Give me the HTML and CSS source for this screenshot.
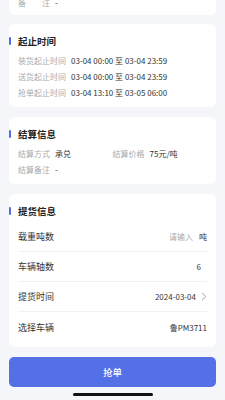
FILE: index.html
```html
<!DOCTYPE html>
<html lang="zh">
<head>
<meta charset="utf-8">
<meta name="viewport" content="width=225">
<link rel="stylesheet" href="styles.css">
</head>
<body>
<div class="page">
  <div class="card card-top">
    <div class="kv"><span class="k k-just"><span>备</span><span>注</span></span><span class="v">-</span></div>
  </div>

  <div class="card">
    <div class="title">起止时间</div>
    <div class="kv"><span class="k">装货起止时间</span><span class="v">03-04 00:00 至 03-04 23:59</span></div>
    <div class="kv"><span class="k">送货起止时间</span><span class="v">03-04 00:00 至 03-04 23:59</span></div>
    <div class="kv"><span class="k">抢单起止时间</span><span class="v">03-04 13:10 至 03-05 06:00</span></div>
  </div>

  <div class="card">
    <div class="title">结算信息</div>
    <div class="grid2">
      <div class="kv"><span class="k">结算方式</span><span class="v">承兑</span></div>
      <div class="kv"><span class="k">结算价格</span><span class="v">75元/吨</span></div>
      <div class="kv"><span class="k">结算备注</span><span class="v">-</span></div>
    </div>
  </div>

  <div class="card card-form">
    <div class="title">提货信息</div>
    <div class="row"><span class="label">载重吨数</span><span class="val"><span class="ph">请输入</span><span class="unit">吨</span></span></div>
    <div class="row"><span class="label">车辆轴数</span><span class="val val-pad">6</span></div>
    <div class="row"><span class="label">提货时间</span><span class="val">2024-03-04<svg class="chev" width="6" height="9" viewBox="0 0 6 9"><path d="M1 0.8 L4.8 4.5 L1 8.2" fill="none" stroke="#9a9a9a" stroke-width="0.9"/></svg></span></div>
    <div class="row"><span class="label">选择车辆</span><span class="val">鲁PM3711</span></div>
  </div>

  <button class="btn">抢单</button>
  <div class="home"></div>
</div>
</body>
</html>
```
FILE: styles.css
```css
* { box-sizing: border-box; }
html, body { margin: 0; padding: 0; }
body {
  background: #f5f6fa;
  font-family: "Noto Sans CJK SC", "Noto Sans", sans-serif;
  color: #333;
  width: 225px;
  height: 400px;
  overflow: hidden;
}
.page {
  display: flex;
  flex-direction: column;
  gap: 10px;
  padding: 0 9px;
}
.card {
  background: #fff;
  border-radius: 6px;
  padding: 10px 9px 7px;
}
.card-top {
  margin-top: -6px;
  padding-top: 0;
  padding-bottom: 5px;
  border-radius: 0 0 6px 6px;
  margin-bottom: -1px;
}
.title {
  display: flex;
  align-items: center;
  height: 14px;
  font-size: 9.5px;
  font-weight: 700;
  color: #222;
  margin-bottom: 4px;
}
.title::before {
  content: "";
  width: 2px;
  height: 8px;
  background: #4f6de0;
  border-radius: 1px;
  margin-left: -9px;
  margin-right: 7px;
}
.kv {
  display: flex;
  align-items: center;
  height: 16px;
  font-size: 8px;
  gap: 5px;
  white-space: nowrap;
}
.k { color: #ababab; }
.k-just {
  width: 32px;
  display: flex;
  justify-content: space-between;
}
.v { color: #333; font-weight: 400; }
.grid2 {
  display: grid;
  grid-template-columns: 1fr 1fr;
}
.card-form { padding-bottom: 5px; }
.row {
  display: flex;
  align-items: center;
  justify-content: space-between;
  height: 30px;
  border-bottom: 1px solid #f2f2f4;
}
.row:last-child { border-bottom: none; }
.label { font-size: 9px; color: #333; }
.val {
  display: flex;
  align-items: center;
  font-size: 8px;
  color: #333;
}
.val-pad { padding-right: 6px; }
.ph { color: #aaa; }
.unit { margin-left: 6px; }
.chev { margin-left: 5px; }
.btn {
  display: block;
  width: 100%;
  height: 30px;
  border: none;
  border-radius: 5px;
  background: #5370e6;
  color: #fff;
  font-family: "Noto Sans CJK SC", sans-serif;
  font-size: 9.5px;
  font-weight: 500;
  padding: 0;
}
.home {
  align-self: center;
  width: 80px;
  height: 3px;
  border-radius: 2px;
  background: #111;
  margin-top: -4px;
}
```
